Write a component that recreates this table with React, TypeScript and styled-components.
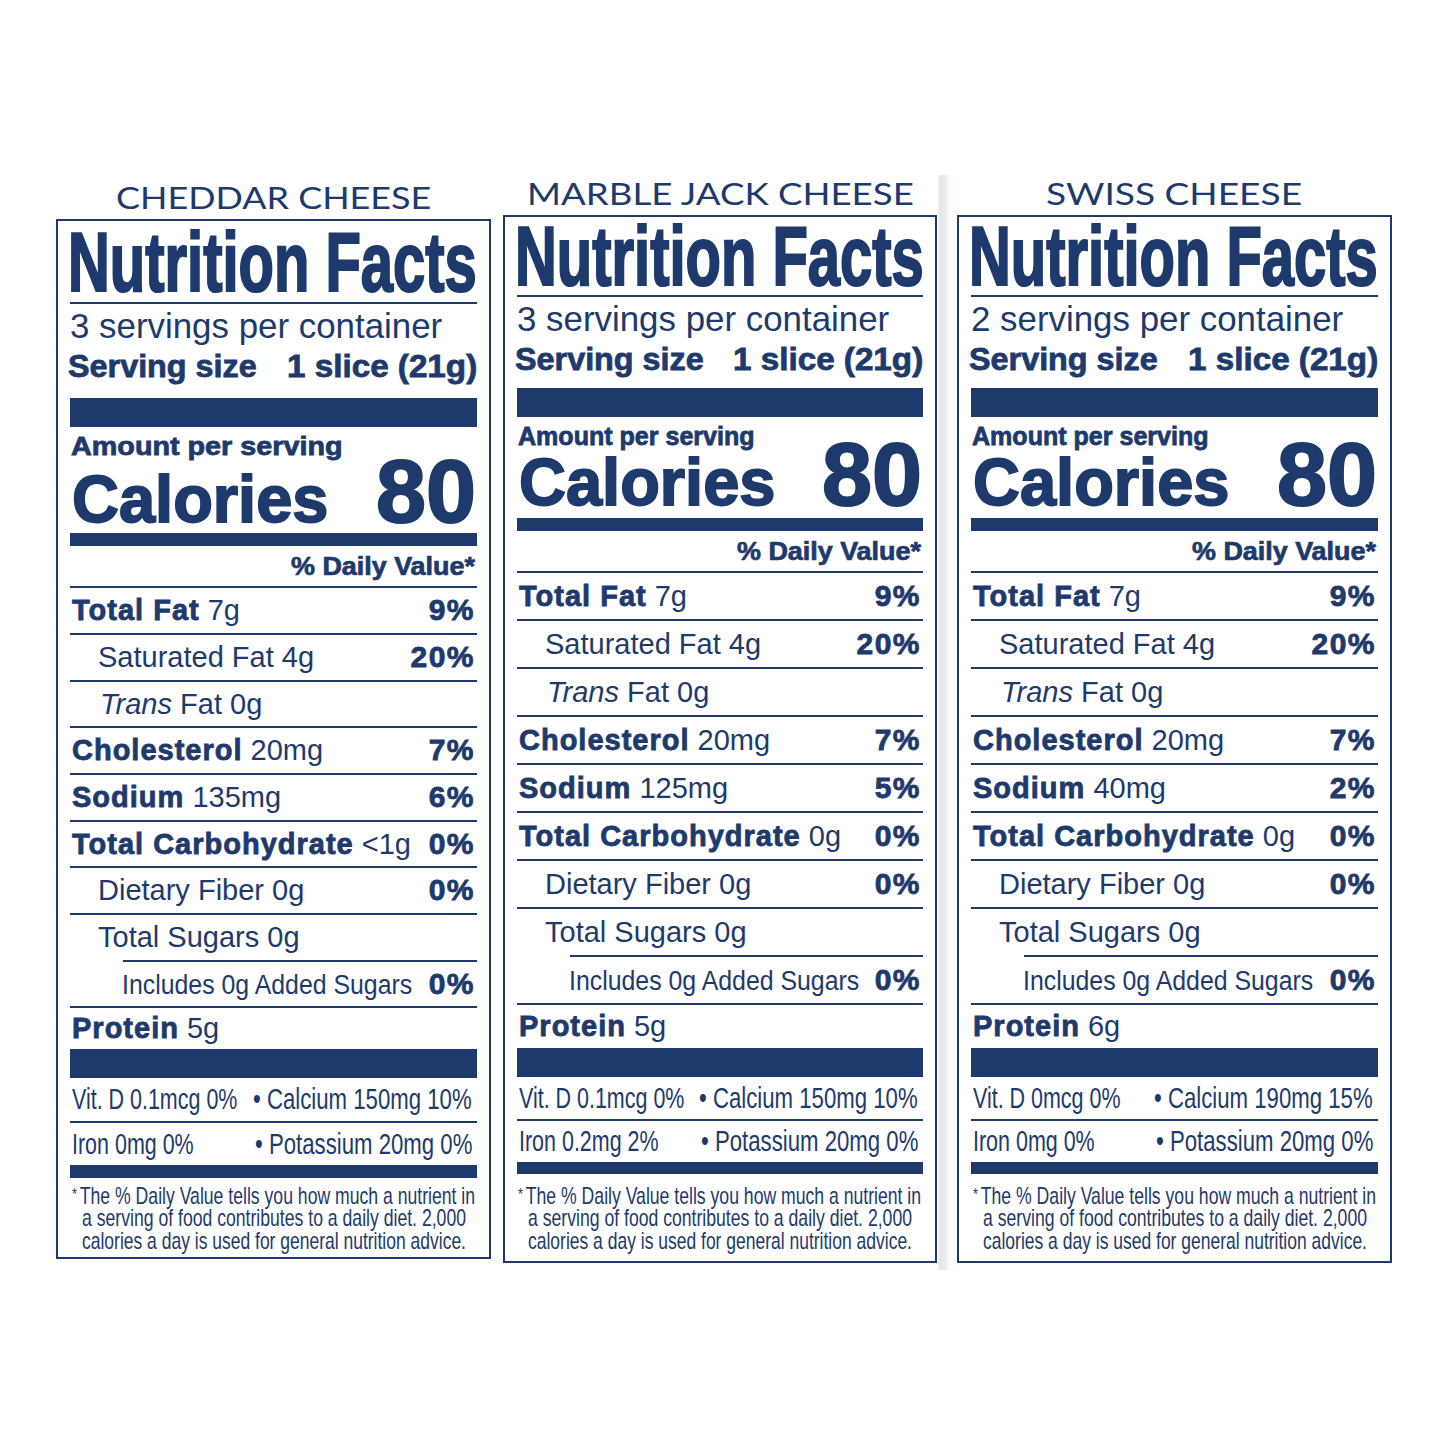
import React, { useLayoutEffect, useRef, useState } from "react";
import styled, { createGlobalStyle } from "styled-components";

const NAVY = "#1e3a6c";

const Global = createGlobalStyle`
  html, body { margin: 0; padding: 0; background: #ffffff; overflow: hidden; }
  body { font-family: "Liberation Sans", Arial, sans-serif; color: ${NAVY}; }
`;

/* ---------- horizontal squeeze (condensed type) ---------- */
const SqText = styled.span`
  display: inline-block;
  white-space: nowrap;
  vertical-align: baseline;
  text-align: left;
  transform-origin: left center;
`;

function Squeeze({ w, sx, children }: { w?: number; sx?: number; children: React.ReactNode }) {
  const ref = useRef<HTMLSpanElement>(null);
  const [m, setM] = useState<{ s: number; mr: number } | null>(null);
  useLayoutEffect(() => {
    const measure = () => {
      const el = ref.current;
      if (!el) return;
      const nat = el.offsetWidth;
      if (!nat) return;
      const s = w ? w / nat : sx ?? 1;
      setM({ s, mr: nat * s - nat });
    };
    measure();
    const f = (document as any).fonts;
    if (f && f.ready) f.ready.then(measure);
  }, [w, sx]);
  return (
    <SqText
      ref={ref}
      style={m ? { transform: `scaleX(${m.s})`, marginRight: m.mr } : undefined}
    >
      {children}
    </SqText>
  );
}

/* ---------- layout ---------- */
const Page = styled.div`
  display: flex;
  align-items: flex-start;
  padding: 175px 0 0 56px;
`;

const Column = styled.section<{ $w: number; $mt: number }>`
  display: flex;
  flex-direction: column;
  width: ${(p) => p.$w}px;
  margin-top: ${(p) => p.$mt}px;
  flex: none;
`;

const Gap = styled.div<{ $w: number }>`
  flex: none;
  width: ${(p) => p.$w}px;
`;

const Sheen = styled.div`
  flex: none;
  width: 20px;
  height: 1095px;
  background: linear-gradient(
    to right,
    #ffffff 0%,
    #e2e3e6 18%,
    #ebecee 42%,
    #fbfbfb 62%,
    #ffffff 100%
  );
`;

const Title = styled.h2`
  margin: 0 0 4px;
  font-family: Lato, "Liberation Sans", sans-serif;
  font-weight: 400;
  font-size: 30px;
  line-height: 36px;
  text-align: center;
  color: ${NAVY};
`;

const Box = styled.div`
  border: 2px solid ${NAVY};
  padding: 0 12px;
  background: #ffffff;
  display: flex;
  flex-direction: column;
`;

const Heading = styled.h1<{ $pt: number; $lh: number }>`
  margin: 0 0 0 -2px;
  padding-top: ${(p) => p.$pt}px;
  height: ${(p) => p.$pt + p.$lh}px;
  box-sizing: border-box;
  font-size: 84px;
  line-height: ${(p) => p.$lh}px;
  font-weight: 700;
  -webkit-text-stroke: 2.2px ${NAVY};
  white-space: nowrap;
`;

const Rule = styled.div`
  height: 2px;
  background: ${NAVY};
`;

const Servings = styled.div`
  height: 44px;
  font-size: 34.5px;
  line-height: 44px;
  white-space: nowrap;
`;

const SizeRow = styled.div<{ $mb: number }>`
  display: flex;
  justify-content: space-between;
  align-items: baseline;
  height: 36px;
  margin: 0 0 ${(p) => p.$mb}px -2px;
  font-size: 32px;
  line-height: 36px;
  font-weight: 700;
  -webkit-text-stroke: 0.8px ${NAVY};
`;

const Bar = styled.div<{ $h: number }>`
  height: ${(p) => p.$h}px;
  background: ${NAVY};
`;

const Amount = styled.div`
  height: 38px;
  padding-left: 1px;
  font-size: 26px;
  line-height: 38px;
  font-weight: 700;
  -webkit-text-stroke: 0.8px ${NAVY};
  white-space: nowrap;
`;

const CalRow = styled.div<{ $mb: number }>`
  display: flex;
  justify-content: space-between;
  align-items: baseline;
  padding: 0 1px 0 2px;
  margin-bottom: ${(p) => p.$mb}px;
  font-weight: 700;
`;

const CalWord = styled.div<{ $lh: number }>`
  font-size: 66px;
  line-height: ${(p) => p.$lh}px;
  -webkit-text-stroke: 1.8px ${NAVY};
`;

const CalNum = styled.div<{ $lh: number }>`
  font-size: 89px;
  line-height: ${(p) => p.$lh}px;
  -webkit-text-stroke: 2px ${NAVY};
`;

const DV = styled.div<{ $lh: number }>`
  height: ${(p) => p.$lh + 2}px;
  box-sizing: border-box;
  border-bottom: 2px solid ${NAVY};
  padding-right: 2px;
  text-align: right;
  font-size: 25px;
  line-height: ${(p) => p.$lh}px;
  font-weight: 700;
  -webkit-text-stroke: 0.7px ${NAVY};
`;

const Row = styled.div<{ $lh: number; $indent: number; $line: number | null; $fs: number }>`
  display: flex;
  justify-content: space-between;
  align-items: baseline;
  box-sizing: border-box;
  height: ${(p) => p.$lh + (p.$line === null ? 0 : 2)}px;
  padding: 0 2px 0 ${(p) => p.$indent}px;
  font-size: ${(p) => p.$fs}px;
  line-height: ${(p) => p.$lh}px;
  white-space: nowrap;
  ${(p) =>
    p.$line === null
      ? ""
      : `background: linear-gradient(${NAVY}, ${NAVY}) no-repeat right bottom / calc(100% - ${p.$line}px) 2px;`}
`;

const RowLeft = styled.span``;

const Nutrient = styled.b`
  font-weight: 700;
  font-size: 29px;
  letter-spacing: 1px;
  -webkit-text-stroke: 0.8px ${NAVY};
`;

const Ital = styled.i`
  font-style: italic;
`;

const Pct = styled.b`
  font-weight: 700;
  font-size: 30px;
  letter-spacing: 1.5px;
  -webkit-text-stroke: 0.8px ${NAVY};
`;

const VitRow = styled.div<{ $lh: number; $line: boolean }>`
  display: flex;
  justify-content: space-between;
  align-items: baseline;
  box-sizing: border-box;
  height: ${(p) => p.$lh + (p.$line ? 2 : 0)}px;
  padding: 0 5px 0 2px;
  font-size: 29px;
  line-height: ${(p) => p.$lh}px;
  border-bottom: ${(p) => (p.$line ? `2px solid ${NAVY}` : "none")};
  white-space: nowrap;
`;

const Foot = styled.div<{ $h: number }>`
  height: ${(p) => p.$h}px;
  display: flex;
  flex-direction: column;
  align-items: center;
  justify-content: center;
  font-size: 24px;
  line-height: 23px;
  white-space: nowrap;
`;

const FootLine = styled.div`
  height: 23px;
`;

const Ast = styled.span`
  font-size: 17px;
  vertical-align: 4px;
  margin-right: 4px;
`;

/* ---------- data ---------- */
type Metrics = {
  top: number;
  nfPad: number;
  nfLH: number;
  sizeMB: number;
  calB: number;
  calMB: number;
  dvLH: number;
  rowLH: number;
  protLH: number;
  vitLH: number;
  ironLH: number;
  bar4: number;
  footH: number;
  amountW: number;
};

const A: Metrics = {
  top: 4,
  nfPad: 2,
  nfLH: 79,
  sizeMB: 14,
  calB: 57,
  calMB: 0,
  dvLH: 40,
  rowLH: 44.67,
  protLH: 41,
  vitLH: 43,
  ironLH: 42,
  bar4: 13,
  footH: 79,
  amountW: 272,
};

const B: Metrics = {
  top: 0,
  nfPad: 0,
  nfLH: 78,
  sizeMB: 11,
  calB: 50,
  calMB: 9,
  dvLH: 40,
  rowLH: 46,
  protLH: 43,
  vitLH: 42,
  ironLH: 41,
  bar4: 12,
  footH: 87,
  amountW: 237,
};

type LabelData = {
  title: string;
  titleW: number;
  width: number;
  servings: string;
  sodium: [string, string];
  carb: string;
  protein: string;
  vit: [string, string, string, string];
  m: Metrics;
};

const LABELS: LabelData[] = [
  {
    title: "CHEDDAR CHEESE",
    titleW: 315,
    width: 435,
    servings: "3",
    sodium: ["135mg", "6%"],
    carb: "<1g",
    protein: "5g",
    vit: ["Vit. D 0.1mcg 0%", "• Calcium 150mg 10%", "Iron 0mg 0%", "• Potassium 20mg 0%"],
    m: A,
  },
  {
    title: "MARBLE JACK CHEESE",
    titleW: 387,
    width: 434,
    servings: "3",
    sodium: ["125mg", "5%"],
    carb: "0g",
    protein: "5g",
    vit: ["Vit. D 0.1mcg 0%", "• Calcium 150mg 10%", "Iron 0.2mg 2%", "• Potassium 20mg 0%"],
    m: B,
  },
  {
    title: "SWISS CHEESE",
    titleW: 256,
    width: 435,
    servings: "2",
    sodium: ["40mg", "2%"],
    carb: "0g",
    protein: "6g",
    vit: ["Vit. D 0mcg 0%", "• Calcium 190mg 15%", "Iron 0mg 0%", "• Potassium 20mg 0%"],
    m: B,
  },
];

function Label({ d }: { d: LabelData }) {
  const m = d.m;
  const lh = m.rowLH;
  return (
    <Column $w={d.width} $mt={m.top}>
      <Title>
        <Squeeze w={d.titleW}>{d.title}</Squeeze>
      </Title>
      <Box>
        <Heading $pt={m.nfPad} $lh={m.nfLH}>
          <Squeeze w={409}>Nutrition Facts</Squeeze>
        </Heading>
        <Rule />
        <Servings>
          <Squeeze w={372}>{d.servings} servings per container</Squeeze>
        </Servings>
        <SizeRow $mb={m.sizeMB}>
          <Squeeze w={189}>Serving size</Squeeze>
          <Squeeze w={190}>1 slice (21g)</Squeeze>
        </SizeRow>
        <Bar $h={29} />
        <Amount>
          <Squeeze w={m.amountW}>Amount per serving</Squeeze>
        </Amount>
        <CalRow $mb={m.calMB}>
          <CalWord $lh={2 * (m.calB - 22.87)}>
            <Squeeze w={256}>Calories</Squeeze>
          </CalWord>
          <CalNum $lh={2 * (m.calB - 30.84)}>
            <Squeeze w={100}>80</Squeeze>
          </CalNum>
        </CalRow>
        <Bar $h={13} />
        <DV $lh={m.dvLH}>
          <Squeeze w={184}>% Daily Value*</Squeeze>
        </DV>

        <Row $lh={lh} $indent={2} $line={0} $fs={29}>
          <RowLeft>
            <Nutrient>Total Fat</Nutrient> 7g
          </RowLeft>
          <Pct>9%</Pct>
        </Row>
        <Row $lh={lh} $indent={28} $line={0} $fs={29}>
          <RowLeft>Saturated Fat 4g</RowLeft>
          <Pct>20%</Pct>
        </Row>
        <Row $lh={lh} $indent={30} $line={0} $fs={29}>
          <RowLeft>
            <Ital>Trans</Ital> Fat 0g
          </RowLeft>
        </Row>
        <Row $lh={lh} $indent={2} $line={0} $fs={29}>
          <RowLeft>
            <Nutrient>Cholesterol</Nutrient> 20mg
          </RowLeft>
          <Pct>7%</Pct>
        </Row>
        <Row $lh={lh} $indent={2} $line={0} $fs={29}>
          <RowLeft>
            <Nutrient>Sodium</Nutrient> {d.sodium[0]}
          </RowLeft>
          <Pct>{d.sodium[1]}</Pct>
        </Row>
        <Row $lh={lh} $indent={2} $line={0} $fs={29}>
          <RowLeft>
            <Nutrient>Total Carbohydrate</Nutrient> {d.carb}
          </RowLeft>
          <Pct>0%</Pct>
        </Row>
        <Row $lh={lh} $indent={28} $line={0} $fs={29}>
          <RowLeft>Dietary Fiber 0g</RowLeft>
          <Pct>0%</Pct>
        </Row>
        <Row $lh={lh} $indent={28} $line={53} $fs={29}>
          <RowLeft>Total Sugars 0g</RowLeft>
        </Row>
        <Row $lh={lh} $indent={52} $line={0} $fs={27}>
          <RowLeft>
            <Squeeze w={290}>Includes 0g Added Sugars</Squeeze>
          </RowLeft>
          <Pct>0%</Pct>
        </Row>
        <Row $lh={m.protLH} $indent={2} $line={null} $fs={29}>
          <RowLeft>
            <Nutrient>Protein</Nutrient> {d.protein}
          </RowLeft>
        </Row>

        <Bar $h={29} />
        <VitRow $lh={m.vitLH} $line={true}>
          <Squeeze sx={0.74}>{d.vit[0]}</Squeeze>
          <Squeeze sx={0.765}>{d.vit[1]}</Squeeze>
        </VitRow>
        <VitRow $lh={m.ironLH} $line={false}>
          <Squeeze sx={0.74}>{d.vit[2]}</Squeeze>
          <Squeeze sx={0.765}>{d.vit[3]}</Squeeze>
        </VitRow>
        <Bar $h={m.bar4} />
        <Foot $h={m.footH}>
          <FootLine>
            <Squeeze w={403}>
              <Ast>*</Ast>The % Daily Value tells you how much a nutrient in
            </Squeeze>
          </FootLine>
          <FootLine>
            <Squeeze w={384}>a serving of food contributes to a daily diet. 2,000</Squeeze>
          </FootLine>
          <FootLine>
            <Squeeze w={384}>calories a day is used for general nutrition advice.</Squeeze>
          </FootLine>
        </Foot>
      </Box>
    </Column>
  );
}

export default function App() {
  return (
    <>
      <Global />
      <Page>
        <Label d={LABELS[0]} />
        <Gap $w={12} />
        <Label d={LABELS[1]} />
        <Sheen />
        <Label d={LABELS[2]} />
      </Page>
    </>
  );
}
